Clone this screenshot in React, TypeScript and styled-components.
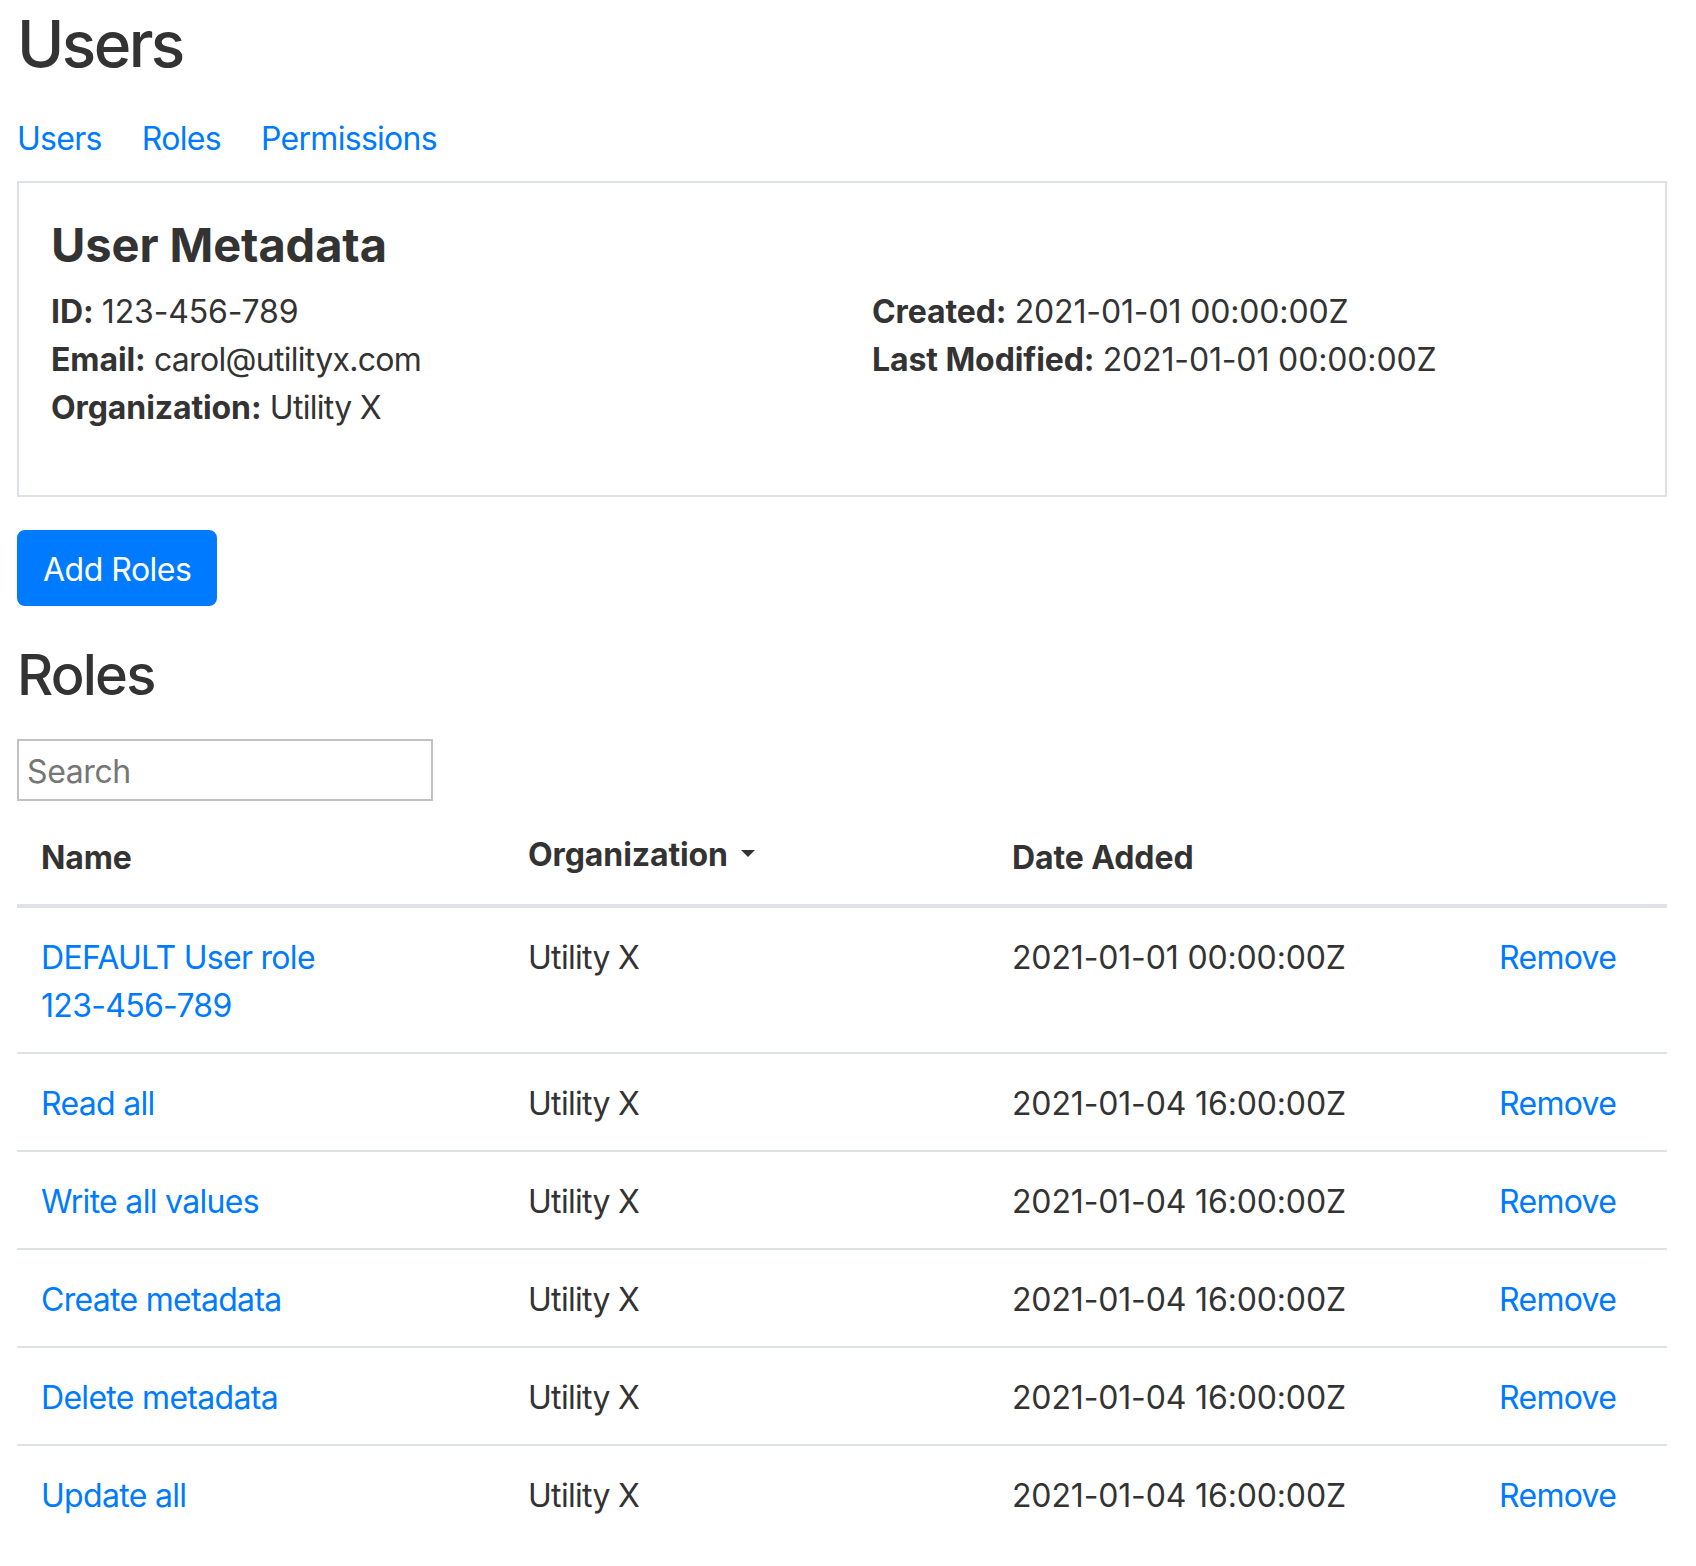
import React from "react";
import styled, { createGlobalStyle } from "styled-components";

const GlobalStyle = createGlobalStyle`
  html, body {
    margin: 0;
    padding: 0;
    background: #ffffff;
  }
  body {
    font-family: Inter, "Noto Sans", "Liberation Sans", sans-serif;
    font-size: 32px;
    line-height: 48px;
    color: #333333;
    letter-spacing: -0.7px;
  }
  *, *::before, *::after {
    box-sizing: border-box;
  }
`;

const Page = styled.main`
  width: 1696px;
  padding: 5px 29px 40px 17px;
`;

const PageTitle = styled.h1`
  margin: 0;
  font-size: 64px;
  line-height: 77px;
  font-weight: 500;
  letter-spacing: -2.6px;
`;

const Nav = styled.nav`
  display: flex;
  gap: 40px;
  margin-top: 33px;
`;

const Link = styled.a`
  color: #007bff;
  text-decoration: none;
  cursor: pointer;
`;

const Card = styled.section`
  margin-top: 18px;
  border: 2px solid #dee2e6;
  padding: 34px 32px 63px;
`;

const CardTitle = styled.h2`
  margin: 0 0 16px;
  font-size: 47px;
  line-height: 55px;
  font-weight: 700;
  letter-spacing: -0.1px;
`;

const DetailGrid = styled.div`
  display: grid;
  grid-template-columns: 1fr 1fr;
  column-gap: 60px;
`;

const DetailColumn = styled.div`
  display: flex;
  flex-direction: column;
`;

const Field = styled.div`
  white-space: nowrap;
`;

const FieldLabel = styled.strong`
  font-weight: 700;
  letter-spacing: -0.1px;
`;

const Timestamp = styled.span`
  letter-spacing: -0.15px;
`;

const Toolbar = styled.div`
  display: flex;
  margin-top: 33px;
`;

const PrimaryButton = styled.button`
  font-family: inherit;
  font-size: 32px;
  line-height: 48px;
  letter-spacing: -0.5px;
  color: #ffffff;
  background: #007bff;
  border: 2px solid #007bff;
  border-radius: 8px;
  padding: 14px 24px 10px;
  cursor: pointer;
`;

const SectionTitle = styled.h2`
  margin: 36px 0 0;
  font-size: 56px;
  line-height: 67px;
  font-weight: 500;
  letter-spacing: -1.8px;
`;

const SearchRow = styled.div`
  display: flex;
  margin-top: 30px;
`;

const SearchInput = styled.input`
  width: 416px;
  height: 62px;
  border: 2px solid #c2c2c2;
  border-radius: 0;
  padding: 2px 8px 0;
  font-family: inherit;
  font-size: 32px;
  letter-spacing: -0.4px;
  color: #333333;
  outline: none;
  &::placeholder {
    color: #767676;
  }
`;

const Table = styled.table`
  width: 100%;
  margin-top: 7px;
  border-collapse: collapse;
  table-layout: fixed;
`;

const HeadCell = styled.th`
  text-align: left;
  padding: 26px 24px 22px;
  font-weight: 700;
  letter-spacing: -0.1px;
  vertical-align: bottom;
  border-bottom: 4px solid #dee2e6;
  white-space: nowrap;
`;

const SortToggle = styled.span`
  display: inline-flex;
  align-items: center;
  gap: 13px;
  margin-top: -3px;
  vertical-align: top;
`;

const Caret = styled.span`
  width: 0;
  height: 0;
  border-top: 7px solid #333333;
  border-left: 7.5px solid transparent;
  border-right: 7.5px solid transparent;
  margin-top: -4px;
`;

const Cell = styled.td`
  padding: 26px 24px 22px;
  vertical-align: top;
  border-top: 2px solid #dee2e6;
`;

const NameLink = styled(Link)`
  display: block;
  max-width: 290px;
`;

const roles = [
  { name: "DEFAULT User role 123-456-789", date: "2021-01-01 00:00:00Z" },
  { name: "Read all", date: "2021-01-04 16:00:00Z" },
  { name: "Write all values", date: "2021-01-04 16:00:00Z" },
  { name: "Create metadata", date: "2021-01-04 16:00:00Z" },
  { name: "Delete metadata", date: "2021-01-04 16:00:00Z" },
  { name: "Update all", date: "2021-01-04 16:00:00Z" },
];

export default function App() {
  return (
    <>
      <GlobalStyle />
      <Page>
        <PageTitle>Users</PageTitle>
        <Nav>
          <Link>Users</Link>
          <Link>Roles</Link>
          <Link>Permissions</Link>
        </Nav>

        <Card>
          <CardTitle>User Metadata</CardTitle>
          <DetailGrid>
            <DetailColumn>
              <Field>
                <FieldLabel>ID:</FieldLabel> <Timestamp>123-456-789</Timestamp>
              </Field>
              <Field>
                <FieldLabel>Email:</FieldLabel> carol@utilityx.com
              </Field>
              <Field>
                <FieldLabel>Organization:</FieldLabel> Utility X
              </Field>
            </DetailColumn>
            <DetailColumn>
              <Field>
                <FieldLabel>Created:</FieldLabel>{" "}
                <Timestamp>2021-01-01 00:00:00Z</Timestamp>
              </Field>
              <Field>
                <FieldLabel>Last Modified:</FieldLabel>{" "}
                <Timestamp>2021-01-01 00:00:00Z</Timestamp>
              </Field>
            </DetailColumn>
          </DetailGrid>
        </Card>

        <Toolbar>
          <PrimaryButton type="button">Add Roles</PrimaryButton>
        </Toolbar>

        <SectionTitle>Roles</SectionTitle>
        <SearchRow>
          <SearchInput placeholder="Search" />
        </SearchRow>

        <Table>
          <colgroup>
            <col style={{ width: 487 }} />
            <col style={{ width: 484 }} />
            <col style={{ width: 487 }} />
            <col style={{ width: 192 }} />
          </colgroup>
          <thead>
            <tr>
              <HeadCell>Name</HeadCell>
              <HeadCell>
                <SortToggle>
                  Organization
                  <Caret />
                </SortToggle>
              </HeadCell>
              <HeadCell>Date Added</HeadCell>
              <HeadCell />
            </tr>
          </thead>
          <tbody>
            {roles.map((r) => (
              <tr key={r.name}>
                <Cell>
                  <NameLink>{r.name}</NameLink>
                </Cell>
                <Cell>Utility X</Cell>
                <Cell>
                  <Timestamp>{r.date}</Timestamp>
                </Cell>
                <Cell>
                  <Link>Remove</Link>
                </Cell>
              </tr>
            ))}
          </tbody>
        </Table>
      </Page>
    </>
  );
}
